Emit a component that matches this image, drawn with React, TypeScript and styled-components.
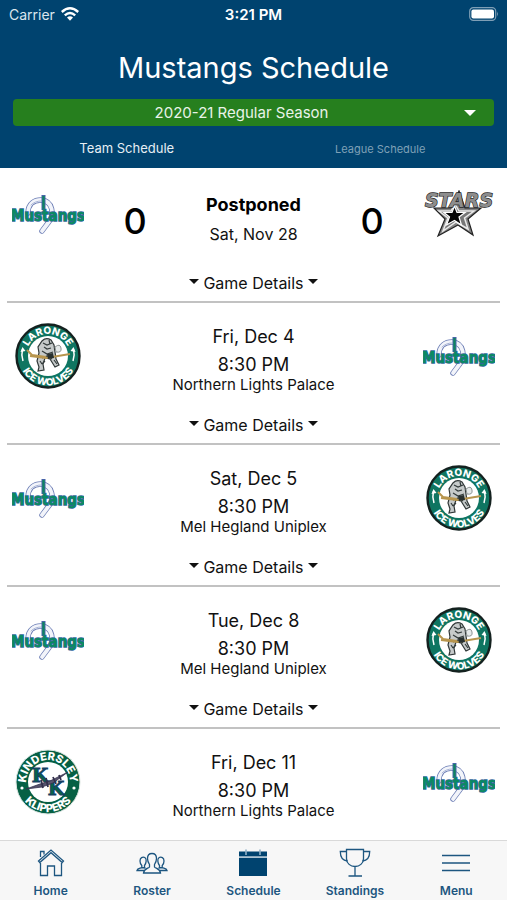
import React from "react";
import styled, { createGlobalStyle, css } from "styled-components";

const NAVY = "#00436f";
const GREEN = "#267f1e";

const GlobalStyle = createGlobalStyle`
  *, *::before, *::after { box-sizing: border-box; }
  body {
    margin: 0;
    background: #fff;
    color: #111;
    font-family: Inter, "Liberation Sans", sans-serif;
  }
  button, select { font: inherit; color: inherit; }
`;

const Screen = styled.div`
  display: flex;
  flex-direction: column;
  height: 100vh;
`;

const Header = styled.header`
  flex: none;
  display: flex;
  flex-direction: column;
  background: ${NAVY};
  color: #fff;
`;

const StatusBar = styled.div`
  display: grid;
  grid-template-columns: 1fr auto 1fr;
  align-items: center;
  height: 28px;
  padding: 0 8px;
  font-size: 14px;
`;

const Carrier = styled.span`
  display: flex;
  align-items: center;
  gap: 6px;
  padding-left: 1px;
  color: #dbe6ee;
`;

const Clock = styled.time`
  font-size: 15px;
  font-weight: 600;
`;

const BatterySlot = styled.span`
  justify-self: end;
  display: flex;
`;

const Title = styled.h1`
  margin: 20px 0 11px;
  font-size: 29px;
  line-height: 40px;
  font-weight: 400;
  text-align: center;
`;

const SeasonPicker = styled.div`
  display: grid;
  align-items: center;
  margin: 0 13px;
  border-radius: 4px;
  background: ${GREEN};

  > * { grid-area: 1 / 1; }
  svg {
    justify-self: end;
    margin-right: 18px;
    pointer-events: none;
  }
`;

const SeasonSelect = styled.select`
  appearance: none;
  width: 100%;
  height: 27px;
  padding: 0 24px 0 0;
  border: 0;
  background: transparent;
  color: #e9f3e8;
  font-size: 15px;
  text-align: center;
  text-align-last: center;
`;

const ScheduleTabs = styled.div`
  display: grid;
  grid-template-columns: 1fr 1fr;
  height: 42px;
`;

const ScheduleTab = styled.button<{ $active?: boolean }>`
  padding: 2px 0 0;
  border: 0;
  background: none;
  ${({ $active }) =>
    $active
      ? css`
          color: #e6eef4;
          font-size: 13px;
        `
      : css`
          padding-top: 4px;
          color: #7fa1b7;
          font-size: 11px;
        `}
`;

const GameList = styled.ul`
  flex: 1;
  min-height: 0;
  margin: 0;
  padding: 0 7px;
  overflow-y: auto;
  scrollbar-width: none;
  list-style: none;
`;

const GameRow = styled.li<{ $final?: boolean }>`
  display: grid;
  grid-template-columns: 82px 1fr 82px;
  padding: ${({ $final }) => ($final ? "13px" : "20px")} 0 6px;
  border-bottom: 2px solid #c2c2c2;
  &:last-child { border-bottom: 0; }
`;

const LogoSlot = styled.div`
  display: flex;
  justify-content: center;
  height: 66px;
  align-items: center;
`;

const Summary = styled.div<{ $final?: boolean }>`
  display: grid;
  grid-template-columns: ${({ $final }) => ($final ? "92px 1fr 92px" : "1fr")};
  text-align: center;
`;

const Score = styled.span`
  align-self: end;
  color: #000;
  font-size: 36px;
  line-height: 56px;
  font-weight: 500;
`;

const GameInfo = styled.div`
  display: flex;
  flex-direction: column;
`;

const Status = styled.strong`
  padding-top: 10px;
  color: #000;
  font-size: 18px;
  line-height: 28px;
  font-weight: 700;
`;

const PlayedOn = styled.span`
  font-size: 16px;
  line-height: 30px;
`;

const GameDate = styled.span`
  font-size: 18px;
  line-height: 28px;
`;

const Venue = styled.span`
  font-size: 15px;
  line-height: 12px;
`;

const DetailsButton = styled.button`
  grid-column: 1 / -1;
  justify-self: center;
  display: flex;
  align-items: center;
  gap: 4px;
  height: 24px;
  margin-top: 22px;
  padding: 0;
  border: 0;
  background: none;
  font-size: 16px;
  svg { margin-bottom: 4px; }
`;

const TabBar = styled.nav`
  flex: none;
  display: grid;
  grid-template-columns: repeat(5, 1fr);
  height: 60px;
  border-top: 1px solid #d9d9d9;
  background: #f7f7f7;
`;

const TabLink = styled.a`
  display: flex;
  flex-direction: column;
  align-items: center;
  gap: 4px;
  padding-top: 6px;
  color: #1d5680;
  font-size: 12px;
  line-height: 16px;
  font-weight: 600;
  text-decoration: none;
`;

const Caret = ({ size = 10 }: { size?: number }) => (
  <svg width={size} height={size / 2} viewBox="0 0 12 6" aria-hidden="true">
    <path d="M0 0h12L6 6z" fill="currentColor" />
  </svg>
);

const WifiIcon = () => (
  <svg width="18" height="14" viewBox="0 0 18 14" aria-hidden="true">
    <g fill="none" stroke="#fff" strokeWidth="2.4">
      <path d="M.8 5Q9-2.400 17.200 5" />
      <path d="M3.800 8.400Q9 3.600 14.200 8.400" />
    </g>
    <path d="M6 10.600Q9 8 12 10.600L9 13.800z" fill="#fff" />
  </svg>
);

const BatteryIcon = () => (
  <svg width="30" height="14" viewBox="0 0 30 14" aria-hidden="true">
    <rect x=".7" y=".7" width="26" height="12.6" rx="3.6" fill="none" stroke="#7f9fb6" strokeWidth="1.2" />
    <rect x="2.4" y="2.4" width="22.6" height="9.2" rx="2" fill="#fff" />
    <path d="M28 4.6q1.8 2.4 0 4.8z" fill="#7f9fb6" />
  </svg>
);

const MustangsLogo = () => (
  <svg width="72" height="42" viewBox="0 0 72 42" role="img" aria-label="Mustangs">
    <g fill="none" strokeLinecap="round">
      <path d="M16 20C16 10 23 7 29 7C41 8 43 22 36 30L30 38" stroke="#6a7cb4" strokeWidth="5.4" />
      <path d="M16 20C16 10 23 7 29 7C41 8 43 22 36 30L30 38" stroke="#f2f4fa" strokeWidth="3.800" />
      <path d="M19 12q4-4 10-4" stroke="#a9b5d6" strokeWidth="1" />
      <path d="M31.500 2v15" stroke="#4763a8" strokeWidth="4" strokeLinecap="butt" />
      <path d="M31.500 3v14" stroke="#0f8560" strokeWidth="2.200" strokeLinecap="butt" />
    </g>
    <text
      x="36"
      y="28"
      textAnchor="middle"
      fontFamily="'DejaVu Sans Condensed', 'DejaVu Sans', sans-serif"
      fontSize="15"
      fontWeight="700"
      fill="#0a8a62"
      stroke="#2f6699"
      strokeWidth="1.4"
      paintOrder="stroke"
    >
      Mustangs
    </text>
  </svg>
);

const StarsLogo = () => (
  <svg width="72" height="48" viewBox="0 0 72 48" role="img" aria-label="Stars">
    <path d="M36 1L42 18H58L45 29L50 45L35 35L15 46L22 29L11 18H29Z" fill="#858585" stroke="#222" strokeWidth="1.2" />
    <path d="M32 14L36 21H51L41.500 28L45 39L33 32L20 41L25 28L16 21H28Z" fill="#777" stroke="#e9e9e9" strokeWidth="1.500" />
    <path d="M31.500 16L34 22.500H42L36 27L38.500 35L31.500 30.500L23.500 35L26.500 27L21 22.500H29Z" fill="#050505" stroke="#fff" strokeWidth="1.2" />
    <text
      x="36"
      y="17"
      textAnchor="middle"
      fontFamily="'DejaVu Sans', sans-serif"
      fontSize="19"
      fontStyle="italic"
      fontWeight="700"
      fill="#8d8d8d"
      stroke="#262626"
      strokeWidth="1.3"
      paintOrder="stroke"
    >
      STARS
    </text>
  </svg>
);

const IceWolvesLogo = ({ id }: { id: string }) => (
  <svg width="66" height="66" viewBox="0 0 66 66" role="img" aria-label="La Ronge Ice Wolves">
    <defs>
      <path id={`${id}-top`} d="M11 33a22 22 0 0 1 44 0" />
      <path id={`${id}-bottom`} d="M3.500 33a29.500 29.500 0 0 0 59 0" />
    </defs>
    <circle cx="33" cy="33" r="31.500" fill="#0f7561" stroke="#14211f" strokeWidth="2.400" />
    <circle cx="33" cy="33" r="20" fill="#fff" />
    <g fill="#fff" fontFamily="Inter, sans-serif" fontSize="10" fontWeight="800" textAnchor="middle">
      <text><textPath href={`#${id}-top`} startOffset="50%">LARONGE</textPath></text>
      <text><textPath href={`#${id}-bottom`} startOffset="50%">ICE WOLVES</textPath></text>
    </g>
    <g fill="none" stroke="#fff" strokeWidth="1.500">
      <path d="M7.500 26q-1.500 6 .5 12M58.500 26q1.500 6-.5 12" />
    </g>
    <path d="M5.500 29l2-5 3 4zM60.500 29l-2-5-3 4z" fill="#fff" />
    <path d="M27 18q4-4 9-1l3 5 1 7 1 7 3 6-4 2-5-8-5-1-2 6 1 6-6 1 1-4-2-6 2-8-1-6z" fill="#c6caca" stroke="#303737" strokeWidth="1.200" />
    <path d="M28 20l4 2 5-2M27 28l5 3 6-2M29 24l3 2 4-1M27 35l5-2 5 3M30 38l-3 3M34 17l1 4M25 38l2 3M39 37l3 4" fill="none" stroke="#333b3b" strokeWidth="1.200" />
    <path d="M40 24q5-4 6 1t-5 4z" fill="#e5e9e9" stroke="#8d9494" />
    <path d="M55 31L31 35 15 33" fill="none" stroke="#b7954e" strokeWidth="1.800" />
    <path d="M12 27l5 5 14 2" fill="none" stroke="#b7954e" strokeWidth="2" />
    <path d="M32 31l6-1 1 5-6 1z" fill="#28302f" />
  </svg>
);

const KlippersLogo = () => (
  <svg width="66" height="66" viewBox="0 0 66 66" role="img" aria-label="Kindersley Klippers">
    <defs>
      <path id="klippers-top" d="M12.300 40.500a22 22 0 1 1 41.400 0" />
      <path id="klippers-bottom" d="M3 33a30 30 0 0 0 60 0" />
    </defs>
    <circle cx="33" cy="33" r="32" fill="#066044" stroke="#dce6e2" strokeWidth="1" />
    <circle cx="33" cy="33" r="20" fill="#fff" />
    <g fill="#fff" fontFamily="Inter, sans-serif" fontSize="11" fontWeight="800" textAnchor="middle">
      <text><textPath href="#klippers-top" startOffset="50%">KINDERSLEY</textPath></text>
      <text><textPath href="#klippers-bottom" startOffset="50%">KLIPPERS</textPath></text>
    </g>
    <circle cx="7" cy="39" r="1.600" fill="#fff" />
    <circle cx="59" cy="39" r="1.600" fill="#fff" />
    <g
      fill="#086449"
      stroke="#153e63"
      strokeWidth="1"
      fontFamily="'DejaVu Serif', serif"
      fontSize="19"
      fontWeight="700"
      textAnchor="middle"
    >
      <text x="25" y="33">K</text>
      <text x="41" y="46">K</text>
    </g>
    <path d="M11 40l14-5 10-3 18-9-15 11-11 4z" fill="#57536c" stroke="#33304c" strokeWidth=".8" />
    <path d="M26 31l2 8M31 29l2 9M38 28l3 7M44 26l2 5" stroke="#33304c" strokeWidth="1.800" />
  </svg>
);

const iconProps = {
  width: 32,
  height: 32,
  viewBox: "0 0 32 32",
  fill: "none",
  stroke: "currentColor",
  strokeWidth: 1.3,
  "aria-hidden": true,
} as const;

const HomeIcon = () => (
  <svg {...iconProps}>
    <path d="M3.500 14L16 3l12.500 11-1.300 1.500L16 5.700 4.800 15.500z" />
    <path d="M5.500 10V4.500h3.500v3M5.500 16v12.500h7V19h7v9.500h7V16" />
  </svg>
);

const RosterIcon = () => (
  <svg {...iconProps}>
    <path d="M16 6.500c-3 0-4.500 2-4.500 5 0 3 1 4.500 2 6v2.500c-1 1.500-5.500 1.500-6 6h17c-.5-4.500-5-4.500-6-6v-2.500c1-1.500 2-3 2-6 0-3-1.500-5-4.500-5z" />
    <path d="M9.500 11c-3-2-5.500 0-5.500 3 0 2.500.8 3.500 1.800 4.500v2C5 21.500 1.500 21 1 23.500h7M5.500 20.500l4 .5M22.500 11c3-2 5.500 0 5.500 3 0 2.500-.8 3.500-1.800 4.500v2c.8 1 4.300.5 4.800 3h-7M26.500 20.500l-4 .5M9.500 11c1 1.500 1 5-1 7.500v2M22.500 11c-1 1.500-1 5 1 7.500v2" />
  </svg>
);

const ScheduleIcon = () => (
  <svg {...iconProps} stroke="none">
    <path d="M2 4.500h28v5H2zM2 11h28v18H2z" fill={NAVY} />
    <path d="M2 10.200h28" stroke="#9db8ca" strokeWidth="1.200" />
    <path d="M9 2.500v5.500M23 2.500v5.500" stroke="#8fb0c6" strokeWidth="1.600" />
  </svg>
);

const StandingsIcon = () => (
  <svg {...iconProps}>
    <path d="M7.500 2.500h17v9c0 5-4 8-8.500 8s-8.500-3-8.500-8zM16 19.500V29M9.500 29h13.500" />
    <path d="M7.500 4.500H1.300c0 5 1.500 9 7.200 9.500M24.500 4.500h6.200c0 5-1.500 9-7.200 9.500" />
  </svg>
);

const MenuIcon = () => (
  <svg {...iconProps}>
    <path d="M2 8.500h28M2 16h28M2 23.500h28" />
  </svg>
);

type Team = "mustangs" | "stars" | "wolves" | "klippers";

interface Game {
  id: string;
  away: Team;
  home: Team;
  date: string;
  time?: string;
  venue?: string;
  status?: string;
  score?: [number, number];
  hasDetails?: boolean;
}

const games: Game[] = [
  { id: "nov-28", away: "mustangs", home: "stars", date: "Sat, Nov 28", status: "Postponed", score: [0, 0], hasDetails: true },
  { id: "dec-4", away: "wolves", home: "mustangs", date: "Fri, Dec 4", time: "8:30 PM", venue: "Northern Lights Palace", hasDetails: true },
  { id: "dec-5", away: "mustangs", home: "wolves", date: "Sat, Dec 5", time: "8:30 PM", venue: "Mel Hegland Uniplex", hasDetails: true },
  { id: "dec-8", away: "mustangs", home: "wolves", date: "Tue, Dec 8", time: "8:30 PM", venue: "Mel Hegland Uniplex", hasDetails: true },
  { id: "dec-11", away: "klippers", home: "mustangs", date: "Fri, Dec 11", time: "8:30 PM", venue: "Northern Lights Palace" },
];

const tabs = [
  { label: "Home", Icon: HomeIcon },
  { label: "Roster", Icon: RosterIcon },
  { label: "Schedule", Icon: ScheduleIcon },
  { label: "Standings", Icon: StandingsIcon },
  { label: "Menu", Icon: MenuIcon },
];

const TeamLogo = ({ team, id }: { team: Team; id: string }) => {
  switch (team) {
    case "mustangs":
      return <MustangsLogo />;
    case "stars":
      return <StarsLogo />;
    case "wolves":
      return <IceWolvesLogo id={id} />;
    case "klippers":
      return <KlippersLogo />;
  }
};

const GameItem = ({ game }: { game: Game }) => {
  const final = Boolean(game.score);
  return (
    <GameRow $final={final}>
      <LogoSlot>
        <TeamLogo team={game.away} id={game.id} />
      </LogoSlot>
      <Summary $final={final}>
        {game.score && <Score>{game.score[0]}</Score>}
        <GameInfo>
          {game.status ? (
            <>
              <Status>{game.status}</Status>
              <PlayedOn>{game.date}</PlayedOn>
            </>
          ) : (
            <>
              <GameDate>{game.date}</GameDate>
              <GameDate>{game.time}</GameDate>
              <Venue>{game.venue}</Venue>
            </>
          )}
        </GameInfo>
        {game.score && <Score>{game.score[1]}</Score>}
      </Summary>
      <LogoSlot>
        <TeamLogo team={game.home} id={game.id} />
      </LogoSlot>
      {game.hasDetails && (
        <DetailsButton type="button">
          <Caret />
          Game Details
          <Caret />
        </DetailsButton>
      )}
    </GameRow>
  );
};

export default function App() {
  return (
    <Screen>
      <GlobalStyle />
      <Header>
        <StatusBar>
          <Carrier>
            Carrier
            <WifiIcon />
          </Carrier>
          <Clock>3:21 PM</Clock>
          <BatterySlot>
            <BatteryIcon />
          </BatterySlot>
        </StatusBar>
        <Title>Mustangs Schedule</Title>
        <SeasonPicker>
          <SeasonSelect aria-label="Season">
            <option>2020-21 Regular Season</option>
          </SeasonSelect>
          <Caret size={12} />
        </SeasonPicker>
        <ScheduleTabs>
          <ScheduleTab type="button" $active>
            Team Schedule
          </ScheduleTab>
          <ScheduleTab type="button">League Schedule</ScheduleTab>
        </ScheduleTabs>
      </Header>
      <GameList>
        {games.map((game) => (
          <GameItem key={game.id} game={game} />
        ))}
      </GameList>
      <TabBar aria-label="Main">
        {tabs.map(({ label, Icon }) => (
          <TabLink key={label} href={`#${label.toLowerCase()}`}>
            <Icon />
            {label}
          </TabLink>
        ))}
      </TabBar>
    </Screen>
  );
}
